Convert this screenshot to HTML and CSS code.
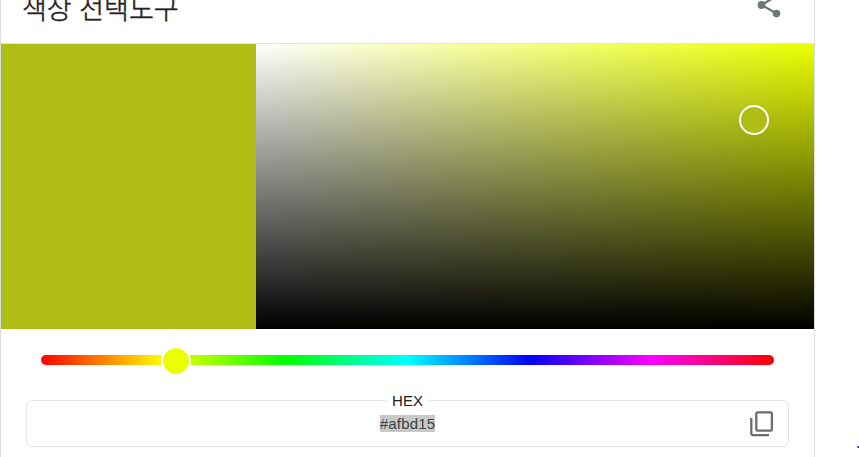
FILE: index.html
```html
<!DOCTYPE html>
<html lang="ko">
<head>
<meta charset="utf-8">
<title>색상 선택도구</title>
<link rel="stylesheet" href="styles.css">
</head>
<body>
<main class="card">
  <header class="header">
    <h1 class="title">색상 선택도구</h1>
    <svg class="share" viewBox="0 0 26 28">
      <path d="M20.5 5 5.5 14l15 8.5" fill="none" stroke="#70757a" stroke-width="2.3"/>
      <g fill="#70757a"><circle cx="20.5" cy="5" r="3.8"/><circle cx="5.5" cy="14" r="3.9"/><circle cx="20.5" cy="22.6" r="3.8"/></g>
    </svg>
  </header>
  <section class="colors">
    <div class="swatch"></div>
    <div class="gradient"><span class="picker"></span></div>
  </section>
  <div class="hue"><span class="thumb"></span></div>
  <div class="field">
    <span class="label">HEX</span>
    <span class="value">#afbd15</span>
    <svg class="copy" viewBox="0 0 24 26">
      <g fill="none" stroke="#6a6d72" stroke-width="2.3">
        <rect x="6.3" y="1.3" width="15.6" height="18.4" rx="1.2"/>
        <path d="M1.3 7v15.8a1.3 1.3 0 0 0 1.3 1.3H19"/>
      </g>
    </svg>
  </div>
</main>
<span class="speck"></span>
</body>
</html>
```
FILE: styles.css
```css
* { box-sizing: border-box; }
body {
  margin: 0;
  height: 457px;
  overflow: hidden;
  position: relative;
  background: #fff;
  font-family: "Liberation Sans", "Noto Sans CJK KR", sans-serif;
  color: #202124;
}
.card {
  width: 815px;
  height: 457px;
  border: solid #dadce0;
  border-width: 0 1px;
}
.header {
  height: 44px;
  border-bottom: 1px solid #e4e4e4;
  display: flex;
  justify-content: space-between;
  align-items: flex-start;
  padding: 0 32px 0 21px;
}
.title {
  margin: -12px 0 0;
  font: 300 27px/40px "Noto Sans CJK KR", sans-serif;
  -webkit-text-stroke: 0.5px #202124;
  white-space: nowrap;
}
.share { width: 26px; height: 28px; margin-top: -9px; }
.colors { display: flex; height: 285px; }
.swatch { width: 255px; background: #afbd15; }
.gradient {
  flex: 1;
  position: relative;
  background: linear-gradient(to top, #000, transparent), linear-gradient(to right, #fff, #eaff00);
}
.picker {
  position: absolute;
  left: 483px;
  top: 61px;
  width: 30px;
  height: 30px;
  border: 2px solid #fff;
  border-radius: 50%;
  background: #afbd15;
}
.hue {
  position: relative;
  height: 10px;
  margin: 26px 40px 0;
  border-radius: 5px;
  background: linear-gradient(to right, #f00, #ff0 16.67%, #0f0 33.33%, #0ff 50%, #00f 66.67%, #f0f 83.33%, #f00);
}
.thumb {
  position: absolute;
  left: 120px;
  top: -9px;
  width: 30px;
  height: 30px;
  border: 2px solid #fff;
  border-radius: 50%;
  background: #eaff00;
  background-clip: padding-box;
}
.field {
  position: relative;
  height: 47px;
  margin: 35px 25px 0;
  border: 1px solid #e4e5e7;
  border-radius: 6px;
  display: flex;
  flex-direction: column;
  align-items: center;
}
.label {
  margin-top: -9px;
  padding: 0 6px;
  background: #fff;
  font-size: 15px;
  line-height: 17px;
}
.value {
  margin-top: 6px;
  background: #c8c8c8;
  color: #3c4043;
  font-size: 15px;
  line-height: 17px;
  letter-spacing: 0.2px;
}
.copy {
  position: absolute;
  right: 14px;
  top: 10px;
  width: 24px;
  height: 26px;
}
.speck {
  position: absolute;
  right: 0;
  top: 446px;
  width: 2px;
  height: 2px;
  border-radius: 1px 0 0 1px;
  background: #3a30ff;
}
```
